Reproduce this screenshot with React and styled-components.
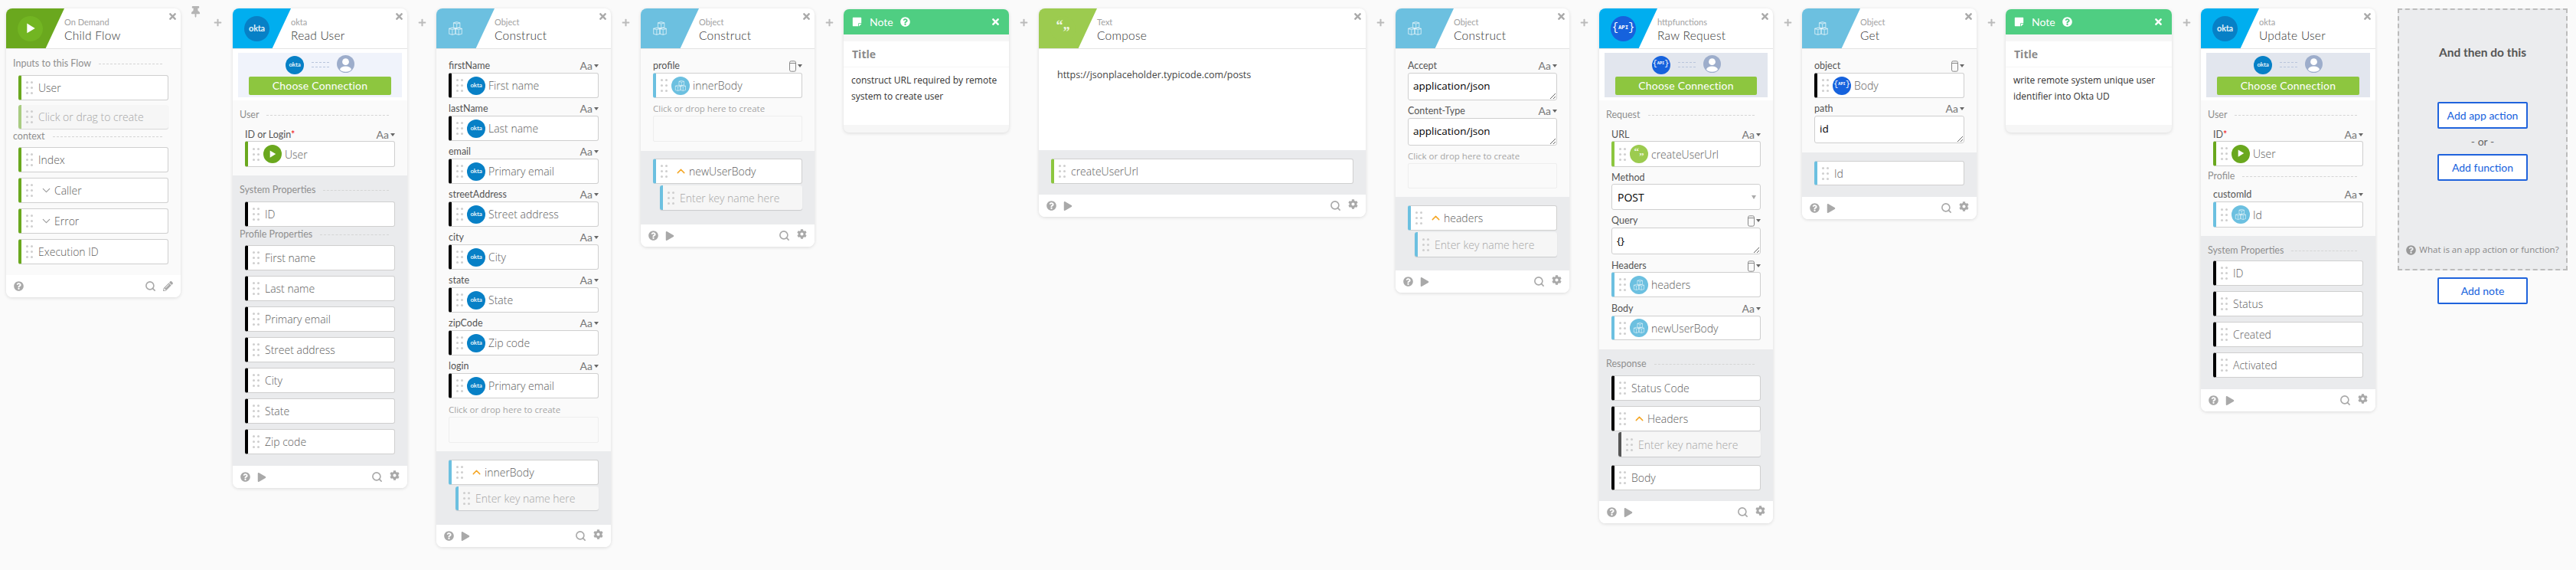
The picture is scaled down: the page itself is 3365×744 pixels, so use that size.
import React from "react";
import styled, { createGlobalStyle } from "styled-components";
import { FaTimes, FaThumbtack, FaPlus, FaQuestionCircle, FaPlay, FaPencilAlt, FaCog, FaStickyNote } from "react-icons/fa";
import { ChevronDown, ChevronUp, Search } from "lucide-react";

const COLORS = { green: "#6aa81e", pale: "#a9cc82", black: "#000", blue: "#6cc0e0", lime: "#8cc63f", grey: "#555", okta: "#00aeef" };

const Global = createGlobalStyle`
  html, body { margin: 0; padding: 0; background: #fafafa; overflow: hidden; }
  body { font-family: "Open Sans", sans-serif; }
`;

const Strip = styled.div`
  display: flex;
  align-items: flex-start;
  width: 3365px;
  height: 744px;
  padding-left: 8px;
  box-sizing: border-box;
`;

const Connector = styled.div`
  flex: none;
  display: flex;
  justify-content: ${(p) => (p.$pin ? "space-between" : "center")};
  width: ${(p) => p.$width || 38}px;
  padding: 24px ${(p) => (p.$pin ? "14px" : "0")} 0 ${(p) => (p.$pin ? "12px" : "0")};
  box-sizing: border-box;
  color: #bbb;
  font-size: 11px;
`;

const Pin = styled(FaThumbtack)`
  margin-top: -16px;
  font-size: 15px;
  color: #b5b5b5;
`;

const Card = styled.div`
  position: relative;
  flex: none;
  width: ${(p) => p.$width || 228}px;
  margin-top: 11px;
  background: #fff;
  border-radius: 8px;
  overflow: hidden;
  box-shadow: 0 1px 4px rgba(0, 0, 0, 0.13);
`;

const Close = styled(FaTimes)`
  position: absolute;
  top: 4px;
  right: 4px;
  font-size: 13px;
  color: #aaa;
`;

const NoteClose = styled(Close)`
  top: 10px;
  right: 11px;
  color: #fff;
`;

const Header = styled.div`
  display: flex;
  height: 52px;
  border-bottom: 1px solid #e3e3e3;
  box-sizing: content-box;
`;

const Wedge = styled.div`
  flex: none;
  display: flex;
  align-items: center;
  width: 76px;
  height: 52px;
  padding-left: 15px;
  box-sizing: border-box;
  background: ${(p) => p.$color};
  clip-path: polygon(0 0, 100% 0, 68% 100%, 0 100%);
`;

const HeaderText = styled.div`
  padding-top: 11px;
`;

const Kind = styled.div`
  font: 11px/13px Lato, sans-serif;
  color: #a2a2a2;
`;

const Title = styled.div`
  margin-top: 1px;
  font: 300 15.5px/20px Lato, sans-serif;
  letter-spacing: 0.25px;
  color: #333;
`;

const Section = styled.div`
  display: flex;
  flex-direction: column;
  padding: ${(p) => p.$pad || "11px 16px 14px"};
  background: ${(p) => ({ plain: "#fafafa", white: "#fff", grey: "#eaebed" }[p.$tone || "plain"])};
  ${(p) => p.$height && `height: ${p.$height}px; box-sizing: border-box;`}
`;

const Divider = styled.div`
  display: flex;
  align-items: center;
  gap: 10px;
  height: 16px;
  margin: ${(p) => p.$mt || 0}px 8px 0 -7px;
  font: 12.5px/16px Lato, sans-serif;
  color: #8f8f8f;
  &::after {
    content: "";
    flex: 1;
    border-top: 1px dashed #d5d5d5;
  }
`;

const LabelRow = styled.div`
  display: flex;
  justify-content: space-between;
  align-items: center;
  height: 16px;
  margin: ${(p) => p.$mt ?? 6}px 0 ${(p) => p.$mb ?? 1}px;
  font: 12.5px/16px Lato, sans-serif;
  color: #555;
`;

const Muted = styled(LabelRow)`
  font-family: "Open Sans", sans-serif;
  font-size: 11.5px;
  color: #a5a5a5;
`;

const Required = styled.span`
  color: #e11;
`;

const TypePick = styled.span`
  display: inline-flex;
  align-items: center;
  gap: 2px;
  font-size: 14px;
  color: #777;
  &::after {
    content: "";
    border: 3.5px solid transparent;
    border-top: 4px solid #666;
    border-bottom: 0;
  }
`;

const Pill = styled.div`
  flex: none;
  display: flex;
  align-items: center;
  height: ${(p) => p.$height || 33}px;
  margin: ${(p) => p.$mt || 0}px 0 0 ${(p) => p.$indent || 0}px;
  box-sizing: border-box;
  overflow: hidden;
  background: ${(p) => (p.$ghost ? "#f6f6f6" : "#fff")};
  border: ${(p) => (p.$ghost ? "0" : "1.5px solid #cfcfcf")};
  border-left: 4px solid ${(p) => p.$accent};
  border-radius: 3px;
  box-shadow: ${(p) => (p.$ghost ? "0 1px 1px rgba(0,0,0,.14)" : "none")};
  font-weight: 300;
  font-size: 14px;
  color: ${(p) => (p.$ghost ? "#a6a6a6" : "#5c5c5c")};
  white-space: nowrap;
`;

const Grip = styled.span`
  flex: none;
  display: grid;
  grid-template-columns: 3px 3px;
  gap: 4px 3px;
  margin: 0 7px 0 6px;
  i {
    width: 3px;
    height: 3px;
    border-radius: 50%;
    background: #cfcfcf;
  }
`;

const Round = styled.span`
  flex: none;
  display: flex;
  align-items: center;
  justify-content: center;
  width: ${(p) => p.$size}px;
  height: ${(p) => p.$size}px;
  border-radius: 50%;
  background: ${(p) => p.$color};
  color: #fff;
  overflow: hidden;
`;

const PillBadge = styled.span`
  flex: none;
  display: flex;
  margin: 0 4px 0 -2px;
`;

const PillChevron = styled.span`
  flex: none;
  display: flex;
  margin: 0 2px;
`;

const OktaWord = styled.span`
  font: 700 ${(p) => p.$size}px/1 Lato, sans-serif;
  letter-spacing: -0.2px;
  color: #e6f3fa;
`;

const ApiWord = styled.span`
  font: 700 ${(p) => p.$size}px/1 "Liberation Mono", monospace;
  color: #fff;
  white-space: nowrap;
  b {
    font-size: 1.9em;
    font-weight: 400;
    vertical-align: -0.16em;
  }
`;

const Quote = styled.span`
  font: 700 ${(p) => p.$size}px/1 "Liberation Serif", serif;
  color: rgba(255, 255, 255, 0.85);
  transform: translateY(${(p) => p.$shift}px);
`;

const Foot = styled.div`
  display: flex;
  align-items: center;
  gap: 9px;
  height: 29px;
  padding: 0 10px;
  background: #fff;
  color: #a9a9a9;
`;

const FootRight = styled.div`
  display: flex;
  align-items: center;
  gap: 9px;
  margin-left: auto;
`;

const Gear = styled(FaCog)`
  margin-top: -4px;
`;

const ConnectPanel = styled.div`
  padding: 5px 7px 4px;
  background: #fff;
`;

const ConnectInner = styled.div`
  height: 58px;
  padding: 0 14px 3px;
  box-sizing: border-box;
  background: ${(p) => p.$bg || "#f0f3fb"};
`;

const ConnectRow = styled.div`
  display: flex;
  justify-content: center;
  align-items: center;
  gap: 10px;
  height: 31px;
`;

const Dashes = styled.span`
  width: 23px;
  height: 5px;
  border-top: 1px dashed #b9c5dc;
  border-bottom: 1px dashed #b9c5dc;
`;

const AvatarIcon = styled.svg`
  margin-top: -3px;
`;

const ConnectButton = styled.div`
  height: 24px;
  background: #8dc63f;
  border-radius: 2px;
  font: 14px/24px Lato, sans-serif;
  letter-spacing: 0.2px;
  text-align: center;
  color: #fff;
`;

const Input = styled.textarea`
  display: block;
  flex: none;
  width: 100%;
  height: ${(p) => p.$height || 36}px;
  min-height: 20px;
  margin: 0;
  padding: 6px 6px;
  box-sizing: border-box;
  border: 1.5px solid #cfcfcf;
  border-radius: 3px;
  background: #fff;
  font: 13.5px/20px "Open Sans", sans-serif;
  color: #000;
  resize: vertical;
  outline: none;
`;

const SelectBox = styled.div`
  display: flex;
  align-items: center;
  justify-content: space-between;
  height: 34px;
  padding: 0 5px 0 7px;
  box-sizing: border-box;
  border: 1.5px solid #cfcfcf;
  border-radius: 3px;
  background: #fff;
  font-size: 14px;
  color: #000;
  &::after {
    content: "";
    border: 3px solid transparent;
    border-top: 5px solid #aaa;
    border-bottom: 0;
  }
`;

const DropBox = styled.div`
  flex: none;
  height: ${(p) => p.$height || 34}px;
  box-sizing: border-box;
  border: 1px solid #eee;
  border-radius: 2px;
  background: #fafafa;
`;

const ComposeText = styled.div`
  padding: 24px;
  font-size: 12.5px;
  line-height: 20px;
  color: #444;
`;

const NoteCard = styled(Card)`
  margin-top: 12px;
  border-radius: 7px;
  background: #f6f6f6;
  padding-bottom: 10px;
`;

const NoteBar = styled.div`
  display: flex;
  align-items: center;
  height: 33px;
  padding-left: 11px;
  background: #4fce82;
  font: 14px Lato, sans-serif;
  color: #fff;
  svg { font-size: 13px; }
  span { margin: 0 9px 0 10px; }
`;

const NoteBody = styled.div`
  height: 109px;
  margin-top: 9px;
  background: #fff;
`;

const NoteTitle = styled.div`
  height: 34px;
  padding: 9px 11px 0;
  box-sizing: border-box;
  border-bottom: 1px solid #f6f6f6;
  font: 700 14px/16px "Open Sans", sans-serif;
  color: #8a8a8a;
`;

const NoteText = styled.div`
  padding: 6px 10px 0;
  font-size: 12px;
  line-height: 21px;
  color: #333;
`;

const NextColumn = styled.div`
  flex: none;
  display: flex;
  flex-direction: column;
  align-items: center;
  width: 222px;
  margin-top: 11px;
`;

const NextPanel = styled.div`
  display: flex;
  flex-direction: column;
  align-items: center;
  width: 100%;
  height: 342px;
  padding-top: 45px;
  box-sizing: border-box;
  border: 2px dashed #bcbcbc;
  background: #ebecee;
`;

const NextTitle = styled.div`
  margin-bottom: 55px;
  font: 700 15.5px/20px Lato, sans-serif;
  color: #555;
`;

const NextButton = styled.div`
  flex: none;
  width: 118px;
  height: 35px;
  box-sizing: border-box;
  border: 2px solid #1f63dc;
  border-radius: 2px;
  background: #fff;
  font: 14px/31px Lato, sans-serif;
  text-align: center;
  color: #1662dd;
`;

const NoteButton = styled(NextButton)`
  margin-top: 9px;
`;

const OrText = styled.div`
  margin: 7px 0;
  font: 14px/19px Lato, sans-serif;
  color: #666;
`;

const NextHelp = styled.div`
  display: flex;
  align-items: center;
  gap: 4px;
  margin-top: 82px;
  font: 11.5px/16px "Open Sans", sans-serif;
  color: #888;
  white-space: nowrap;
  svg { font-size: 13px; color: #999; }
`;

const Cubes = ({ size, color = "#fff" }) => (
  <svg width={size} height={size} viewBox="0 0 24 24" fill="none" stroke={color} strokeWidth="1.4" strokeOpacity="0.55">
    <path d="M9 3.5l5-1.5 5 1.5v7l-5 1.5-5-1.5z" />
    <path d="M9 3.5l5 1.5 5-1.5M14 5v7" />
    <path d="M2 12.5l5-1.5 5 1.5v8l-5 1.5-5-1.5z" />
    <path d="M12 12.5l5-1.5 5 1.5v8l-5 1.5-5-1.5z" />
    <path d="M2 12.5l5 1.5 5-1.5 5 1.5 5-1.5M7 14v8M17 14v8" />
  </svg>
);

const PlayGlyph = ({ size }) => (
  <svg width={size} height={size} viewBox="0 0 12 12" fill="#fff">
    <path d="M2 0.5l9 5.5-9 5.5z" />
  </svg>
);

const Avatar = ({ size = 23 }) => (
  <AvatarIcon width={size} height={size} viewBox="0 0 24 24">
    <circle cx="12" cy="12" r="12" fill="#9dadcb" />
    <circle cx="12" cy="9" r="4.6" fill="#fff" />
    <ellipse cx="12" cy="19" rx="7.6" ry="3.8" fill="#fff" />
  </AvatarIcon>
);

const DbPick = () => (
  <TypePick>
    <svg width="9" height="15" viewBox="0 0 9 15" fill="none" stroke="#888" strokeWidth="1">
      <rect x="0.5" y="0.8" width="8" height="13.4" rx="2" />
      <path d="M0.5 3.5h8" />
    </svg>
  </TypePick>
);

const badgeFor = (kind, size) => {
  if (kind === "okta") return <Round $size={size} $color="#0780c6"><OktaWord $size={size * 0.33}>okta</OktaWord></Round>;
  if (kind === "api") return <Round $size={size} $color="#1662dd"><ApiWord $size={size * 0.22}><b>{"{"}</b>API<b>{"}"}</b></ApiWord></Round>;
  if (kind === "cubes") return <Round $size={size} $color="#6cc0e0"><Cubes size={size * 0.66} /></Round>;
  if (kind === "play") return <Round $size={size} $color={size > 30 ? "#72b522" : "#6aa81e"}><PlayGlyph size={size * 0.42} /></Round>;
  if (kind === "quote") return (
    <Round $size={size} $color="#9ccb4f">
      <Quote $size={size * 0.55} $shift={-size * 0.12}>“</Quote>
      <Quote $size={size * 0.55} $shift={size * 0.14}>”</Quote>
    </Round>
  );
  return null;
};

const Field = ({ accent = "black", badge, chevron, ghost, mt, indent, height, children }) => (
  <Pill $accent={COLORS[accent]} $ghost={ghost} $mt={mt} $indent={indent} $height={height}>
    <Grip>{[0, 1, 2, 3, 4, 5].map((i) => <i key={i} />)}</Grip>
    {badge && <PillBadge>{badgeFor(badge, 24)}</PillBadge>}
    {chevron === "down" && <PillChevron><ChevronDown size={17} color="#999" strokeWidth={1.5} /></PillChevron>}
    {chevron === "up" && <PillChevron><ChevronUp size={17} color="#f5a623" strokeWidth={2} /></PillChevron>}
    {children}
  </Pill>
);

const Head = ({ color, badge, kind, title }) => (
  <Header>
    <Wedge $color={color}>{badge}</Wedge>
    <HeaderText>
      <Kind>{kind}</Kind>
      <Title>{title}</Title>
    </HeaderText>
  </Header>
);

const Footer = ({ edit }) => (
  <Foot>
    <FaQuestionCircle size={13} />
    {!edit && <FaPlay size={12} />}
    <FootRight>
      <Search size={15} strokeWidth={2.6} />
      {edit ? <FaPencilAlt size={13} /> : <Gear size={13} />}
    </FootRight>
  </Foot>
);

const Connection = ({ badge, bg }) => (
  <ConnectPanel>
    <ConnectInner $bg={bg}>
      <ConnectRow>
        {badgeFor(badge, 24)}
        <Dashes />
        <Avatar />
      </ConnectRow>
      <ConnectButton>Choose Connection</ConnectButton>
    </ConnectInner>
  </ConnectPanel>
);

const Plus = ({ width }) => (
  <Connector $width={width}>
    <FaPlus />
  </Connector>
);

const Labeled = ({ label, db, mt, mb, required, children }) => (
  <>
    <LabelRow $mt={mt} $mb={mb}>
      <span>{label}{required && <Required>*</Required>}</span>
      {db ? <DbPick /> : db === false ? null : <TypePick>Aa</TypePick>}
    </LabelRow>
    {children}
  </>
);

const DropHere = ({ mt = 6, height }) => (
  <>
    <Muted $mt={mt}>Click or drop here to create</Muted>
    <DropBox $height={height} />
  </>
);

const constructRows = [
  ["firstName", "First name"],
  ["lastName", "Last name"],
  ["email", "Primary email"],
  ["streetAddress", "Street address"],
  ["city", "City"],
  ["state", "State"],
  ["zipCode", "Zip code"],
  ["login", "Primary email"],
];

const profileRows = ["First name", "Last name", "Primary email", "Street address", "City", "State", "Zip code"];

export default function App() {
  return (
    <Strip>
      <Global />

      <Card>
        <Close />
        <Head color={COLORS.green} kind="On Demand" title="Child Flow" badge={badgeFor("play", 33)} />
        <Section>
          <Divider>Inputs to this Flow</Divider>
          <Field accent="green" mt={7}>User</Field>
          <Field ghost accent="pale" mt={6} height={31}>Click or drag to create</Field>
          <Divider $mt={2}>context</Divider>
          <Field accent="green" mt={6}>Index</Field>
          <Field accent="green" mt={7} chevron="down">Caller</Field>
          <Field accent="green" mt={7} chevron="down">Error</Field>
          <Field accent="green" mt={7}>Execution ID</Field>
        </Section>
        <Footer edit />
      </Card>

      <Connector $pin $width={68}>
        <Pin />
        <FaPlus />
      </Connector>

      <Card>
        <Close />
        <Head color={COLORS.okta} kind="okta" title="Read User" badge={badgeFor("okta", 33)} />
        <Connection badge="okta" />
        <Section $pad="11px 16px 11px">
          <Divider>User</Divider>
          <Labeled label="ID or Login" required mt={10} mb={0}>
            <Field accent="green" badge="play" height={34}>User</Field>
          </Labeled>
        </Section>
        <Section $tone="grey" $pad="11px 16px 15px">
          <Divider>System Properties</Divider>
          <Field mt={7}>ID</Field>
          <Divider $mt={2}>Profile Properties</Divider>
          {profileRows.map((name, i) => <Field key={name} mt={i ? 7 : 6}>{name}</Field>)}
        </Section>
        <Footer />
      </Card>

      <Plus />

      <Card>
        <Close />
        <Head color={COLORS.blue} kind="Object" title="Construct" badge={<Cubes size={20} />} />
        <Section $pad="8px 16px 11px">
          {constructRows.map(([key, name]) => (
            <Labeled key={key} label={key}>
              <Field badge="okta">{name}</Field>
            </Labeled>
          ))}
          <DropHere mt={7} />
        </Section>
        <Section $tone="grey" $pad="11px 16px 19px">
          <Field accent="blue" chevron="up">innerBody</Field>
          <Field ghost accent="blue" mt={2} indent={9} height={31}>Enter key name here</Field>
        </Section>
        <Footer />
      </Card>

      <Plus width={39} />

      <Card $width={227}>
        <Close />
        <Head color={COLORS.blue} kind="Object" title="Construct" badge={<Cubes size={20} />} />
        <Section $pad="8px 16px 12px">
          <Labeled label="profile" db>
            <Field accent="blue" badge="cubes">innerBody</Field>
          </Labeled>
          <DropHere />
        </Section>
        <Section $tone="grey" $pad="10px 16px 19px">
          <Field accent="blue" chevron="up">newUserBody</Field>
          <Field ghost accent="blue" mt={2} indent={9} height={32}>Enter key name here</Field>
        </Section>
        <Footer />
      </Card>

      <Plus />

      <NoteCard $width={216}>
        <NoteClose />
        <NoteBar>
          <FaStickyNote />
          <span>Note</span>
          <FaQuestionCircle />
        </NoteBar>
        <NoteBody>
          <NoteTitle>Title</NoteTitle>
          <NoteText>construct URL required by remote system to create user</NoteText>
        </NoteBody>
      </NoteCard>

      <Plus width={39} />

      <Card $width={427}>
        <Close />
        <Head color="#9ccb4f" kind="Text" title="Compose" badge={badgeFor("quote", 33)} />
        <Section $tone="white" $pad="0" $height={132}>
          <ComposeText>https://jsonplaceholder.typicode.com/posts</ComposeText>
        </Section>
        <Section $tone="grey" $pad="11px 16px 14px">
          <Field accent="lime">createUserUrl</Field>
        </Section>
        <Footer />
      </Card>

      <Plus width={39} />

      <Card $width={227}>
        <Close />
        <Head color={COLORS.blue} kind="Object" title="Construct" badge={<Cubes size={20} />} />
        <Section $pad="8px 16px 11px">
          <Labeled label="Accept">
            <Input readOnly defaultValue="application/json" />
          </Labeled>
          <Labeled label="Content-Type">
            <Input readOnly defaultValue="application/json" />
          </Labeled>
          <DropHere height={33} />
        </Section>
        <Section $tone="grey" $pad="11px 16px 18px">
          <Field accent="blue" chevron="up">headers</Field>
          <Field ghost accent="blue" mt={2} indent={9} height={32}>Enter key name here</Field>
        </Section>
        <Footer />
      </Card>

      <Plus width={39} />

      <Card $width={227}>
        <Close />
        <Head color={COLORS.okta} kind="httpfunctions" title="Raw Request" badge={badgeFor("api", 33)} />
        <Connection badge="api" bg="#e2e6ee" />
        <Section $pad="11px 16px 12px">
          <Divider>Request</Divider>
          <Labeled label="URL" mt={10} mb={0}>
            <Field accent="lime" badge="quote" height={34}>createUserUrl</Field>
          </Labeled>
          <Labeled label="Method" db={false} mb={0}>
            <SelectBox>POST</SelectBox>
          </Labeled>
          <Labeled label="Query" db>
            <Input readOnly defaultValue="{}" $height={35} />
          </Labeled>
          <Labeled label="Headers" db mt={7} mb={0}>
            <Field accent="blue" badge="cubes">headers</Field>
          </Labeled>
          <Labeled label="Body" mt={7}>
            <Field accent="blue" badge="cubes" height={32}>newUserBody</Field>
          </Labeled>
        </Section>
        <Section $tone="grey" $pad="11px 16px 14px">
          <Divider>Response</Divider>
          <Field mt={7}>Status Code</Field>
          <Field mt={7} chevron="up">Headers</Field>
          <Field ghost accent="grey" mt={1} indent={9} height={32}>Enter key name here</Field>
          <Field mt={11}>Body</Field>
        </Section>
        <Footer />
      </Card>

      <Plus />

      <Card>
        <Close />
        <Head color={COLORS.blue} kind="Object" title="Get" badge={<Cubes size={20} />} />
        <Section $pad="8px 16px 12px">
          <Labeled label="object" db>
            <Field badge="api">Body</Field>
          </Labeled>
          <Labeled label="path">
            <Input readOnly defaultValue="id" />
          </Labeled>
        </Section>
        <Section $tone="grey" $pad="11px 16px 15px">
          <Field accent="blue" height={32}>Id</Field>
        </Section>
        <Footer />
      </Card>

      <Plus />

      <NoteCard $width={217}>
        <NoteClose />
        <NoteBar>
          <FaStickyNote />
          <span>Note</span>
          <FaQuestionCircle />
        </NoteBar>
        <NoteBody>
          <NoteTitle>Title</NoteTitle>
          <NoteText>write remote system unique user identifier into Okta UD</NoteText>
        </NoteBody>
      </NoteCard>

      <Plus />

      <Card>
        <Close />
        <Head color={COLORS.okta} kind="okta" title="Update User" badge={badgeFor("okta", 33)} />
        <Connection badge="okta" bg="#e2e6ee" />
        <Section $pad="11px 16px 11px">
          <Divider>User</Divider>
          <Labeled label="ID" required mt={10} mb={0}>
            <Field accent="green" badge="play">User</Field>
          </Labeled>
          <Divider $mt={5}>Profile</Divider>
          <Labeled label="customId" mt={8}>
            <Field accent="blue" badge="cubes" height={34}>Id</Field>
          </Labeled>
        </Section>
        <Section $tone="grey" $pad="11px 16px 15px">
          <Divider>System Properties</Divider>
          <Field mt={5}>ID</Field>
          <Field mt={7}>Status</Field>
          <Field mt={7}>Created</Field>
          <Field mt={7}>Activated</Field>
        </Section>
        <Footer />
      </Card>

      <Connector $width={29} />

      <NextColumn>
        <NextPanel>
          <NextTitle>And then do this</NextTitle>
          <NextButton>Add app action</NextButton>
          <OrText>- or -</OrText>
          <NextButton>Add function</NextButton>
          <NextHelp>
            <FaQuestionCircle />
            What is an app action or function?
          </NextHelp>
        </NextPanel>
        <NoteButton>Add note</NoteButton>
      </NextColumn>
    </Strip>
  );
}
